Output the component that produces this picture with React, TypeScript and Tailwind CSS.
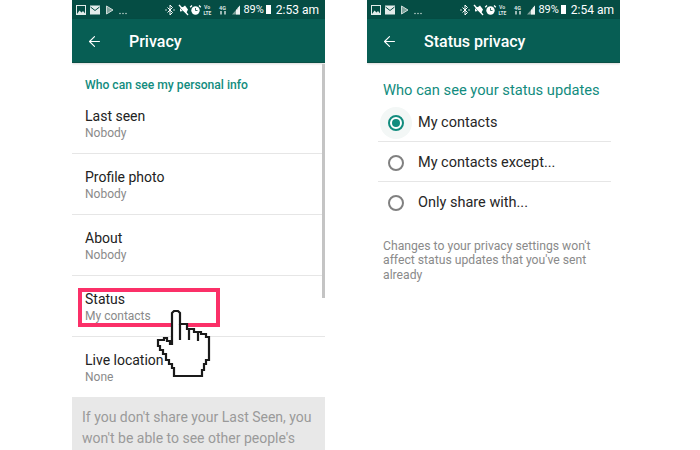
import { ArrowLeft } from "lucide-react";

function StatusBar({ time }: { time: string }) {
  return (
    <div className="h-[19px] bg-[#054d44] flex items-center pl-[4px] pr-[6px] text-white">
      <svg width="54" height="12" viewBox="0 0 54 12" fill="none" className="-ml-[1px]">
        <rect x="1.5" y="1.5" width="9" height="9" stroke="#e3ecea" />
        <path d="M2 10l2.5-3.5 2 2 1.5-1.5 2.5 3z" fill="#e3ecea" />
        <rect x="15" y="1.5" width="10" height="9" fill="#e3ecea" />
        <path d="M15.5 3l4.5 3.5 4.5-3.5" stroke="#054d44" />
        <path d="M31.5 2l6.5 4-6.5 4z" stroke="#cfdcd9" fill="#7fa39c" />
        <circle cx="45" cy="9.5" r=".7" fill="#e3ecea" />
        <circle cx="48" cy="9.5" r=".7" fill="#e3ecea" />
        <circle cx="51" cy="9.5" r=".7" fill="#e3ecea" />
      </svg>
      <div className="flex-1" />
      <svg width="76" height="12" viewBox="0 0 76 12" fill="none">
        <path d="M2.5 3.5l5 5-2.5 2.5v-10l2.5 2.5-5 5" stroke="#fff" strokeWidth="1" />
        <circle cx="1" cy="6" r=".7" fill="#fff" />
        <circle cx="9" cy="6" r=".7" fill="#fff" />
        <path d="M15 3.5l3-.5 2-1.5 3 4-2 4-3-2.500-3 .5z" fill="#fff" />
        <path d="M14 1l9 10" stroke="#fff" strokeWidth="1.4" />
        <path d="M14.500 1l9 10" stroke="#054d44" strokeWidth=".6" transform="translate(-1.200 1)" />
        <circle cx="30.500" cy="6.500" r="4.200" fill="#fff" />
        <path d="M27 1.500l-1.800 1.800M34 1.500l1.800 1.800" stroke="#fff" strokeWidth="1.3" />
        <path d="M30.500 4v2.500h2" stroke="#054d44" strokeWidth=".8" />
        <text x="39" y="5.300" fontSize="5.200" fontWeight="700" fill="#cfdcd9">Vo</text>
        <text x="38.500" y="10.800" fontSize="4.800" fontWeight="700" fill="#dfe8e6">LTE</text>
        <text x="54" y="5.500" fontSize="5.500" fontWeight="700" fill="#dfe8e6">4G</text>
        <path d="M56 7v3.500M60 7v3.500" stroke="#cfdcd9" strokeWidth="1.500" />
        <path d="M67 10.500l8-9v9z" fill="#7fa39c" />
        <path d="M71 10.500v-5h1.500v-1.500l2.500-2.500v9z" fill="#eef3f2" />
      </svg>
      <span className="text-[11px] leading-none ml-[2px]">89%</span>
      <span className="w-[5px] h-[9px] bg-white ml-[2px] mr-[5px]" />
      <span className="text-[12px] leading-none">{time}</span>
    </div>
  );
}

function Toolbar({ title }: { title: string }) {
  return (
    <div className="h-[44px] bg-[#075e54] flex items-center pt-[2px] border-b border-[#0a5046] shadow-[0_1px_2px_rgba(0,0,0,0.15)]">
      <ArrowLeft size={17} strokeWidth={1.6} className="ml-[14px] text-white" />
      <span className="ml-[26px] text-white text-[16px] font-medium">{title}</span>
    </div>
  );
}

function PrivacyRow({ title, sub, last }: { title: string; sub: string; last?: boolean }) {
  return (
    <div className={"h-[61px] pl-[13px] pt-[13px] " + (last ? "" : "border-b border-[#e6e6e6]")}>
      <div className="text-[14px] leading-[20px] text-[#222]">{title}</div>
      <div className="text-[12px] leading-[14px] text-[#8a8a8a]">{sub}</div>
    </div>
  );
}

function RadioRow({ label, checked, last }: { label: string; checked?: boolean; last?: boolean }) {
  return (
    <div className={"h-[40px] pt-[2px] flex items-center " + (last ? "" : "border-b border-[#e6e6e6]")}>
      <span className="w-[38px] pl-[10px] shrink-0">
        {checked ? (
          <span className="relative block w-[16px] h-[16px]">
            <span className="absolute -inset-[8px] rounded-full bg-[#f3f7f6]" />
            <span className="absolute inset-0 rounded-full border-2 border-[#128c7e] bg-white" />
            <span className="absolute inset-[4px] rounded-full bg-[#128c7e]" />
          </span>
        ) : (
          <span className="block w-[16px] h-[16px] rounded-full border-2 border-[#808080]" />
        )}
      </span>
      <span className="relative text-[14.5px] text-[#262626] ml-[2px]">{label}</span>
    </div>
  );
}

function Hand() {
  return (
    <svg width="70" height="85" viewBox="0 0 70 85" fill="none" className="absolute left-[78px] top-[300px]">
      <path
        d="M22 13L24 11H28L30 13V24H37V29H44V32H51V34H56V37H59V60H56V64H54V70H52V76H24V68H22V64H19V60H16V54H13V50H10V46H8V40H14V38H17V41H20V44H22Z"
        fill="#fff"
        stroke="#1a1a1a"
        strokeWidth="2.2"
      />
      <path d="M30 24V40M39 29V40M48 33V41" stroke="#1a1a1a" strokeWidth="2.2" />
    </svg>
  );
}

export default function App() {
  return (
    <div className="w-[700px] h-[450px] bg-white flex gap-[42px] pl-[72px] overflow-hidden font-['Roboto',sans-serif]">
      <div className="relative w-[253px] h-[450px] overflow-hidden">
        <StatusBar time="2:53 am" />
        <Toolbar title="Privacy" />
        <div className="h-[30px] pl-[13px] pt-[15px] text-[12.15px] leading-[14px] font-medium text-[#128c7e]">
          Who can see my personal info
        </div>
        <PrivacyRow title="Last seen" sub="Nobody" />
        <PrivacyRow title="Profile photo" sub="Nobody" />
        <PrivacyRow title="About" sub="Nobody" />
        <PrivacyRow title="Status" sub="My contacts" />
        <PrivacyRow title="Live location" sub="None" last />
        <div className="mt-[-1px] bg-[#e8e8e8] h-[60px] px-[10px] pt-[10px] text-[14px] leading-[21px] text-[#9a9a9a]">
          If you don't share your Last Seen, you won't be able to see other people's
        </div>
        <div className="absolute right-0 top-[64px] w-[3px] h-[234px] bg-[#c4c4c4]" />
        <div className="absolute left-[6px] top-[288px] w-[142px] h-[39px] border-[4px] border-[#fb3068]" />
        <Hand />
      </div>
      <div className="relative w-[253px] h-[450px] overflow-hidden">
        <StatusBar time="2:54 am" />
        <Toolbar title="Status privacy" />
        <div className="pl-[16px] pt-[17px] text-[14.7px] leading-[20px] text-[#128c7e]">
          Who can see your status updates
        </div>
        <div className="ml-[11px] w-[233px] mt-[2px]">
          <RadioRow label="My contacts" checked />
          <RadioRow label="My contacts except..." />
          <RadioRow label="Only share with..." last />
        </div>
        <div className="pl-[16px] pr-[16px] mt-[17px] text-[12.2px] leading-[14.4px] text-[#8a8a8a]">
          Changes to your privacy settings won't affect status updates that you've sent already
        </div>
      </div>
    </div>
  );
}
